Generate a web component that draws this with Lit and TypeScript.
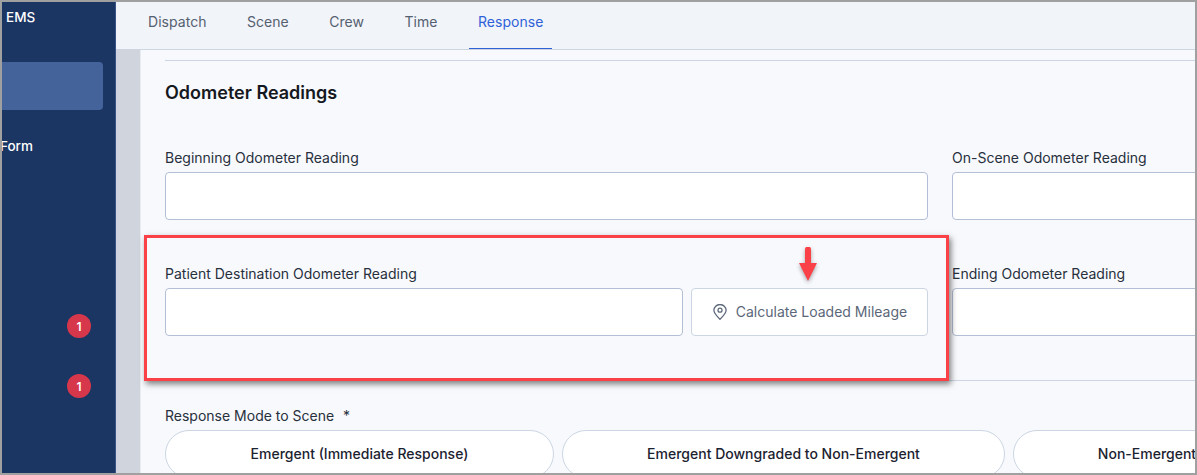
import { LitElement, html, css } from "lit";
import { customElement } from "lit/decorators.js";

@customElement("app-root")
export class AppRoot extends LitElement {
  static styles = css`
    :host { display: block; width: 1197px; height: 475px; font-family: Inter, "Liberation Sans", sans-serif; }
    * { box-sizing: border-box; }
    .frame { position: relative; width: 1197px; height: 475px; border: 2px solid #a0a0a0; overflow: hidden; display: flex; background: #f8f9fc; }
    .side { width: 114px; flex: none; background: #1c3664; border-right: 1px solid #3a5488; color: #fff; font-size: 13.5px; font-weight: 500; display: flex; flex-direction: column; }
    .ems { height: 14px; margin-top: 8px; padding-left: 4px; line-height: 14px; }
    .active { height: 48px; width: 101px; margin-top: 38px; background: #44639a; border-radius: 0 4px 4px 0; }
    .form { margin-top: 27px; margin-left: -2px; height: 18px; line-height: 18px; }
    .badge { width: 24px; height: 24px; border-radius: 50%; background: #d7374b; font-size: 12px; font-weight: 600; display: flex; align-items: center; justify-content: center; margin-left: 65px; }
    .b1 { margin-top: 159px; }
    .b2 { margin-top: 36px; }
    .main { flex: 1; min-width: 0; display: flex; flex-direction: column; }
    .tabs { height: 48px; flex: none; background: #f1f4f9; border-bottom: 1px solid #cdd5e1; display: flex; gap: 22.4px; padding-left: 23px; font-size: 14px; color: #556070; }
    .tab { padding: 0 9px; height: 47px; line-height: 40px; letter-spacing: 0.05px; }
    .tab.on { color: #2f62d8; border-bottom: 1px solid #2f62d8; }
    .body { flex: 1; display: flex; min-height: 0; }
    .gutter { width: 24px; flex: none; background: #d0d4dc; }
    .panel { flex: 1; min-width: 0; border-left: 1px solid #e8ebf0; padding: 10px 0 0 24px; overflow: hidden; }
    .rule { height: 1px; background: #ccd6e4; }
    h2 { margin: 22px 0 0; font-size: 18px; line-height: 20px; font-weight: 600; color: #15181e; }
    .grid { display: grid; grid-template-columns: 763px 763px; column-gap: 24px; row-gap: 46px; margin-top: 47px; }
    label { display: block; font-size: 14px; line-height: 16px; color: #27303c; margin-bottom: 6px; white-space: nowrap; }
    .input { height: 48px; background: #fff; border: 1px solid #b3bfd4; border-radius: 4px; }
    .with-btn { display: flex; gap: 8px; }
    .with-btn .input { width: 518px; flex: none; }
    .btn { flex: 1; height: 48px; padding-bottom: 1px; background: #fff; border: 1px solid #ccd5e3; border-radius: 4px; display: flex; align-items: center; justify-content: center; gap: 8px; font-size: 14px; color: #5b6779; white-space: nowrap; }
    .btn svg { display: block; }
    .rule2 { margin-top: 44px; }
    .mode { margin-top: 27px; }
    .mode label { margin-bottom: 6px; }
    .star { margin-left: 5px; }
    .pills { display: flex; gap: 8px; }
    .pill { flex: none; height: 48px; padding-bottom: 1px; background: #fff; border: 1px solid #ccd6e4; border-radius: 24px; font-size: 14px; font-weight: 450; color: #1b2230; display: flex; align-items: center; justify-content: center; white-space: nowrap; }
    .p1 { width: 389px; }
    .p2 { width: 443px; }
    .p3 { width: 268px; }
    .note { position: absolute; left: 142px; top: 233px; width: 805px; height: 146px; border: 3px solid #fb4148; box-shadow: 2px 3px 6px rgba(0,0,0,.5); }
    .arrow { position: absolute; left: 793px; top: 245px; filter: drop-shadow(0 2px 2px rgba(0,0,0,.35)); }
  `;

  render() {
    return html`
      <div class="frame">
        <aside class="side">
          <div class="ems">EMS</div>
          <div class="active"></div>
          <div class="form">Form</div>
          <div class="badge b1">1</div>
          <div class="badge b2">1</div>
        </aside>
        <div class="main">
          <nav class="tabs">
            <div class="tab">Dispatch</div>
            <div class="tab">Scene</div>
            <div class="tab">Crew</div>
            <div class="tab">Time</div>
            <div class="tab on">Response</div>
          </nav>
          <div class="body">
            <div class="gutter"></div>
            <section class="panel">
              <div class="rule"></div>
              <h2>Odometer Readings</h2>
              <div class="grid">
                <div><label>Beginning Odometer Reading</label><div class="input"></div></div>
                <div><label>On-Scene Odometer Reading</label><div class="input"></div></div>
                <div>
                  <label>Patient Destination Odometer Reading</label>
                  <div class="with-btn">
                    <div class="input"></div>
                    <div class="btn">
                      <svg width="16" height="16" viewBox="0 0 16 16" fill="none" stroke="#5b6779" stroke-width="1.25">
                        <path d="M8 15.4 C5.2 12 1.9 9.4 1.9 6.2 A6.1 5.7 0 0 1 14.1 6.2 C14.1 9.4 10.8 12 8 15.4 Z" stroke-linejoin="round" />
                        <circle cx="8" cy="6.2" r="2" />
                      </svg>
                      <span>Calculate Loaded Mileage</span>
                    </div>
                  </div>
                </div>
                <div><label>Ending Odometer Reading</label><div class="input"></div></div>
              </div>
              <div class="rule rule2"></div>
              <div class="mode">
                <label>Response Mode to Scene<span class="star"> *</span></label>
                <div class="pills">
                  <div class="pill p1">Emergent (Immediate Response)</div>
                  <div class="pill p2">Emergent Downgraded to Non-Emergent</div>
                  <div class="pill p3">Non-Emergent</div>
                </div>
              </div>
            </section>
          </div>
        </div>
        <div class="note"></div>
        <svg class="arrow" width="26" height="38" viewBox="0 0 26 38">
          <path d="M13 2.5 L13 17" stroke="#fb4148" stroke-width="6" stroke-linecap="round" fill="none" />
          <path d="M4 16 L22 16 L13 34 Z" fill="#fb4148" />
        </svg>
      </div>
    `;
  }
}
